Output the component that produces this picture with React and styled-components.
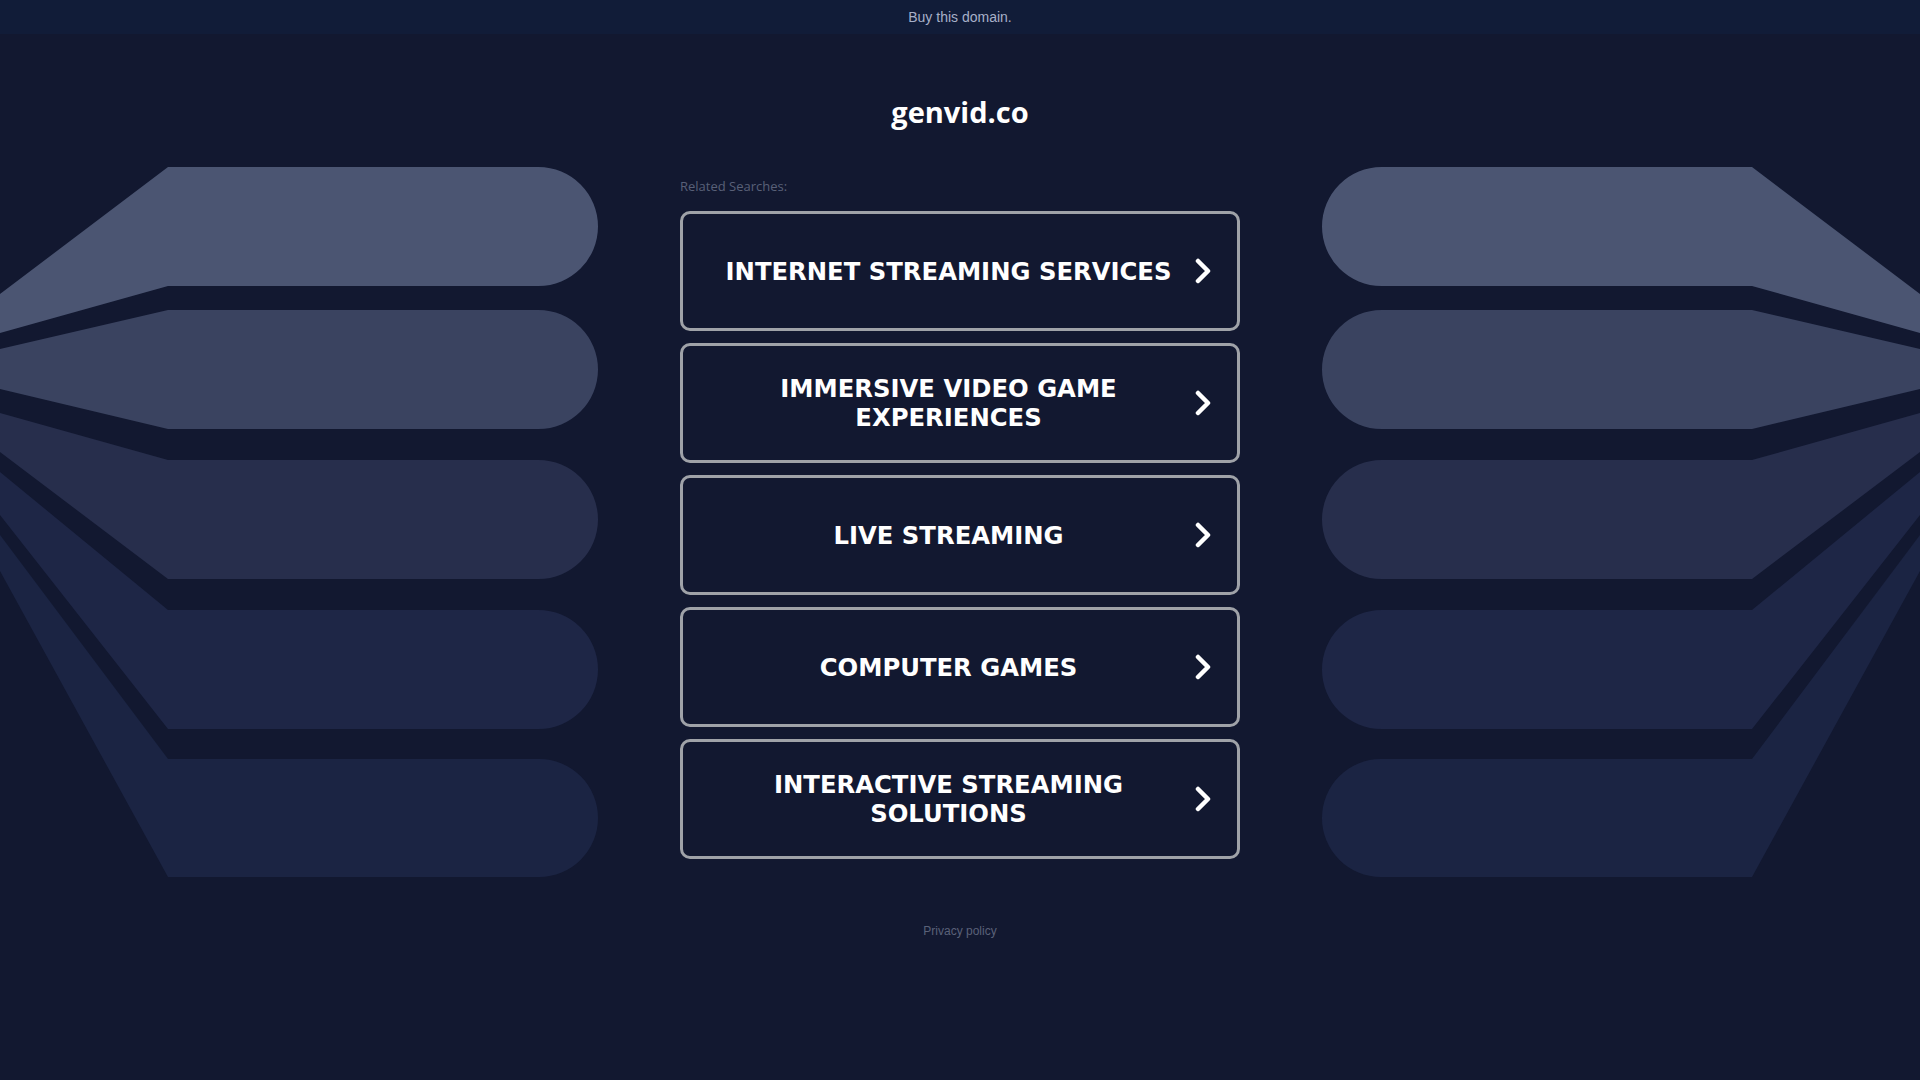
import React from 'react';
import styled, {createGlobalStyle} from 'styled-components';

const GlobalStyle = createGlobalStyle`
    html, body {
        margin: 0;
        padding: 0;
        background: #121830;
    }
    body {
        font-family: "Open Sans", "Liberation Sans", Arial, sans-serif;
        color: #fff;
    }
`;

const Page = styled.div`
    min-height: 100vh;
    display: flex;
    flex-direction: column;
    background: #121830;
`;

const TopBar = styled.div`
    height: 34px;
    display: flex;
    align-items: center;
    justify-content: center;
    background: #111c38;
    font-family: "Liberation Sans", Arial, sans-serif;
    font-size: 14px;
    color: #a7b0c8;
`;

const Title = styled.h1`
    margin: 61px 0 0;
    text-align: center;
    font-family: "Open Sans", sans-serif;
    font-weight: 700;
    font-size: 29px;
    line-height: 34px;
    color: #fff;
`;

const Stage = styled.div`
    margin-top: 37px;
    display: grid;
    grid-template-columns: 1fr 560px 1fr;
    column-gap: 82px;
    align-items: start;
`;

const Art = styled.svg`
    display: block;
    justify-self: ${p => (p.$flip ? 'start' : 'end')};
    transform: ${p => (p.$flip ? 'scaleX(-1)' : 'none')};
`;

const Column = styled.div`
    padding-top: 11px;
    display: flex;
    flex-direction: column;
`;

const Related = styled.div`
    font-family: "Open Sans", sans-serif;
    font-size: 13px;
    line-height: 18px;
    color: #596078;
    margin-bottom: 16px;
`;

const List = styled.div`
    display: flex;
    flex-direction: column;
    gap: 12px;
`;

const SearchLink = styled.a`
    box-sizing: border-box;
    height: 120px;
    display: flex;
    align-items: center;
    gap: 5px;
    padding: 0 25px;
    border: 3px solid #9fa2a8;
    border-radius: 10px;
    text-decoration: none;
    cursor: pointer;
`;

const Label = styled.span`
    flex: 1;
    text-align: center;
    font-family: "DejaVu Sans", Verdana, sans-serif;
    font-weight: 700;
    font-size: 24.3px;
    line-height: 29px;
    color: #fff;
`;

const Footer = styled.div`
    margin-top: 46px;
    text-align: center;
    font-family: "Liberation Sans", Arial, sans-serif;
    font-size: 12px;
    line-height: 15px;
    color: #5a6178;
`;

// left edge [a,b], flat part [top,bottom]
const bands = [
    {a: 294, b: 333, top: 167, bottom: 286, fill: '#4b5572'},
    {a: 349, b: 389, top: 310, bottom: 429, fill: '#3a4360'},
    {a: 413, b: 452, top: 460, bottom: 579, fill: '#272e4c'},
    {a: 472, b: 515, top: 610, bottom: 729, fill: '#1e2646'},
    {a: 535, b: 571, top: 759, bottom: 877, fill: '#1b2443'},
];

const bandPath = ({a, b, top, bottom}) => {
    const r = (bottom - top) / 2;
    const end = 598 - r;
    return `M0 ${a} L168 ${top} L${end} ${top} A${r} ${r} 0 0 1 ${end} ${bottom} L168 ${bottom} L0 ${b} Z`;
};

const Decoration = ({flip}) => (
    <Art $flip={flip} width="598" height="712" viewBox="0 166 598 712">
        {bands.map((band, i) => (
            <path key={i} d={bandPath(band)} fill={band.fill} />
        ))}
    </Art>
);

const Chevron = () => (
    <svg width="18" height="26" viewBox="0 0 18 26">
        <polyline points="4,3 14,13 4,23" fill="none" stroke="#fff" strokeWidth="4.5" strokeLinecap="round" strokeLinejoin="round" />
    </svg>
);

const searches = [
    'INTERNET STREAMING SERVICES',
    'IMMERSIVE VIDEO GAME EXPERIENCES',
    'LIVE STREAMING',
    'COMPUTER GAMES',
    'INTERACTIVE STREAMING SOLUTIONS',
];

const App = () => (
    <>
        <GlobalStyle />
        <Page>
            <TopBar>Buy this domain.</TopBar>
            <Title>genvid.co</Title>
            <Stage>
                <Decoration />
                <Column>
                    <Related>Related Searches:</Related>
                    <List>
                        {searches.map(item => (
                            <SearchLink key={item}>
                                <Label>{item}</Label>
                                <Chevron />
                            </SearchLink>
                        ))}
                    </List>
                </Column>
                <Decoration flip />
            </Stage>
            <Footer>Privacy policy</Footer>
        </Page>
    </>
);

export default App;
